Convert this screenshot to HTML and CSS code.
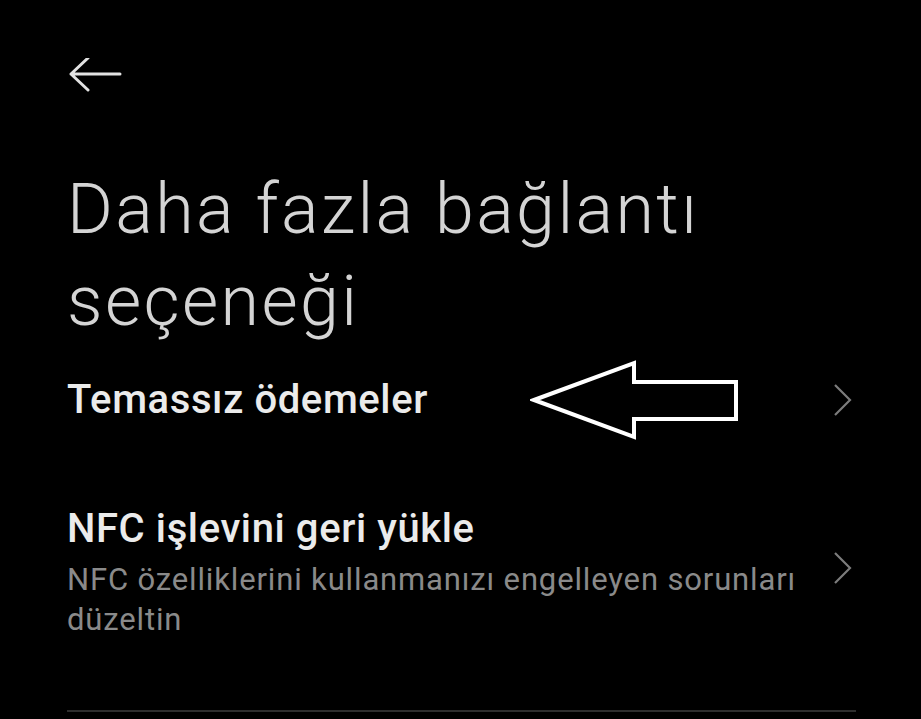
FILE: index.html
```html
<!DOCTYPE html>
<html lang="tr">
<head>
<meta charset="utf-8">
<link rel="stylesheet" href="styles.css">
</head>
<body>
<div class="screen">
  <header class="topbar">
    <svg class="back" width="56" height="40" viewBox="0 0 56 40">
      <path d="M3 16 H52 M20 0 L3 16 L20 32" fill="none" stroke="#e2e2e2" stroke-width="3" stroke-linecap="round" stroke-linejoin="round"/>
    </svg>
  </header>
  <h1 class="title">Daha fazla bağlantı seçeneği</h1>
  <div class="row row-single">
    <div class="row-text">
      <div class="row-title">Temassız ödemeler</div>
    </div>
    <svg class="chev" width="20" height="34" viewBox="0 0 20 34"><path d="M2 2 L17 17 L2 32" fill="none" stroke="#7c7c7c" stroke-width="2.2"/></svg>
    <svg class="annot" width="212" height="82" viewBox="0 0 212 82">
      <path d="M4 40 L104 3 L104 22 L206 22 L206 59 L104 59 L104 77 Z" fill="none" stroke="#ffffff" stroke-width="4" stroke-linejoin="miter"/>
    </svg>
  </div>
  <div class="row row-double">
    <div class="row-text">
      <div class="row-title">NFC işlevini geri yükle</div>
      <div class="row-sub">NFC özelliklerini kullanmanızı engelleyen sorunları düzeltin</div>
    </div>
    <svg class="chev" width="20" height="34" viewBox="0 0 20 34"><path d="M2 2 L17 17 L2 32" fill="none" stroke="#7c7c7c" stroke-width="2.2"/></svg>
  </div>
  <div class="divider"></div>
</div>
</body>
</html>
```
FILE: styles.css
```css
* { box-sizing: border-box; }
html, body {
  margin: 0;
  padding: 0;
  background: #000;
}
body {
  width: 921px;
  height: 719px;
  overflow: hidden;
  font-family: Roboto, "Noto Sans", "Liberation Sans", sans-serif;
}
.screen {
  padding: 0 66px 0 67px;
}
.topbar {
  height: 163px;
  padding-top: 58px;
}
.back {
  display: block;
  margin-left: 1px;
}
.title {
  margin: 0;
  font-weight: 300;
  font-size: 70px;
  line-height: 92px;
  color: #d4d4d4;
  letter-spacing: 2.4px;
  width: 720px;
}
.row {
  display: flex;
  align-items: center;
  justify-content: space-between;
  position: relative;
}
.row-single {
  margin-top: 29px;
}
.row-double {
  margin-top: 81px;
}
.row-text {
  display: flex;
  flex-direction: column;
  gap: 7px;
}
.row-title {
  font-weight: 500;
  font-size: 40px;
  line-height: 48px;
  color: #ebebeb;
  letter-spacing: 0.6px;
}
.row-sub {
  font-size: 31px;
  line-height: 40px;
  color: #8a8a8a;
  letter-spacing: 0.85px;
  max-width: 750px;
}
.chev {
  display: block;
  flex: none;
}
.row-single .chev { margin-right: 2px; }
.row-double .chev { margin-top: -10px; margin-right: 2px; }
.annot {
  position: absolute;
  left: 463px;
  top: -16px;
}
.divider {
  margin-top: 70px;
  height: 2px;
  background: #2e2e2e;
  width: 789px;
}
```
